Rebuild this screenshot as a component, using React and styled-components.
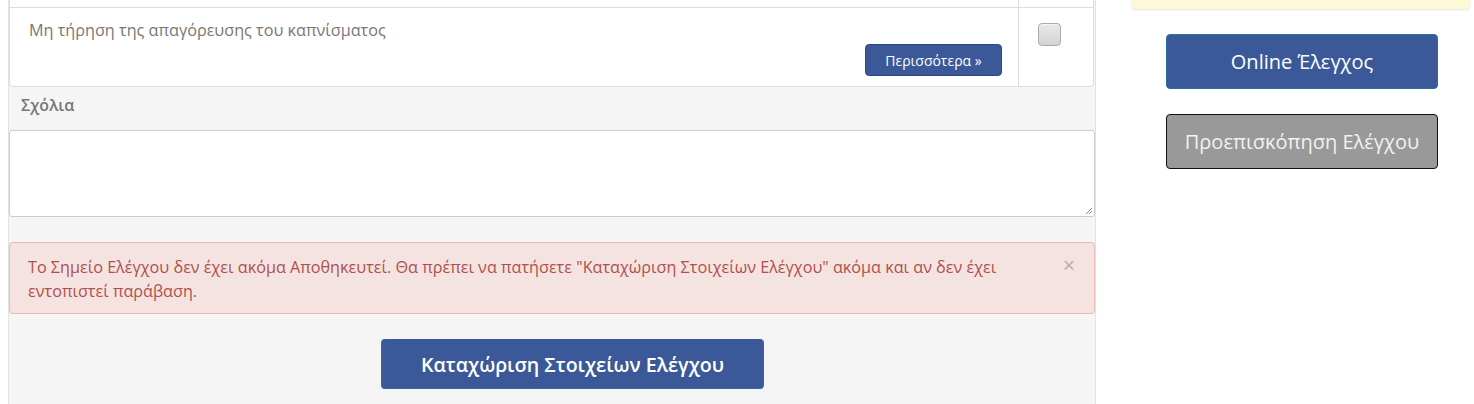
import React from "react";
import styled, { createGlobalStyle } from "styled-components";

const Global = createGlobalStyle`
  html, body { margin: 0; padding: 0; background: #fff; }
  body { font-family: "Open Sans", "Noto Sans", sans-serif; color: #333; }
  * { box-sizing: border-box; }
`;

const Page = styled.div`
  display: flex;
  align-items: flex-start;
  width: 1474px;
  height: 404px;
  overflow: hidden;
`;

const MainPanel = styled.div`
  margin-left: 8px;
  width: 1088px;
  height: 404px;
  background: #f5f5f5;
  border-left: 1px solid #e3e3e3;
  border-right: 1px solid #e3e3e3;
  display: flex;
  flex-direction: column;
`;

const Table = styled.div`
  width: 1085px;
  background: #fff;
  border: 1px solid #dddddd;
  border-top: none;
  border-radius: 0 0 4px 4px;
  display: flex;
  flex-direction: column;
`;

const Row = styled.div`
  display: grid;
  grid-template-columns: 1009px 1fr;
  height: ${(p) => p.$h}px;
  border-top: ${(p) => (p.$first ? "none" : "1px solid #dddddd")};
`;

const TextCell = styled.div`
  display: flex;
  flex-direction: column;
  padding: 11px 16px 10px 19px;
  border-right: 1px solid #dddddd;
`;

const RuleText = styled.div`
  font-size: 16.2px;
  line-height: 22px;
  color: #777;
`;

const MoreButton = styled.button`
  align-self: flex-end;
  margin-top: auto;
  height: 32px;
  width: 137px;
  border: 1px solid #2e4a80;
  border-radius: 4px;
  background: #3b5998;
  color: #fff;
  font-family: inherit;
  font-size: 14px;
  padding: 0;
`;

const CheckCell = styled.div`
  padding: 15px 0 0 19px;
`;

const CheckBox = styled.span`
  display: block;
  width: 23px;
  height: 23px;
  border: 1px solid #aaa;
  border-radius: 4px;
  background: linear-gradient(#e9e9e9, #d4d4d4);
  box-shadow: inset 0 1px 0 #f4f4f4;
`;

const Label = styled.div`
  margin: 7px 0 0 12px;
  height: 36px;
  font-size: 16px;
  font-weight: 600;
  color: #777;
  line-height: 22px;
`;

const TextArea = styled.div`
  position: relative;
  height: 87px;
  background: #fff;
  border: 1px solid #cccccc;
  border-radius: 3px;
`;

const Grip = styled.svg`
  position: absolute;
  right: 1px;
  bottom: 1px;
`;

const Alert = styled.div`
  position: relative;
  margin-top: 25px;
  height: 72px;
  padding: 12px 60px 0 18px;
  background: #f4e3e1;
  border: 1px solid #e8b8b2;
  border-radius: 4px;
  color: #b0504c;
  font-size: 16.2px;
  line-height: 24px;
`;

const Close = styled.span`
  position: absolute;
  right: 19px;
  top: 10px;
  font-size: 21px;
  line-height: 24px;
  color: #c4a9a8;
`;

const SubmitRow = styled.div`
  display: flex;
  padding: 25px 0 0 372px;
`;

const SubmitButton = styled.button`
  width: 383px;
  height: 50px;
  background: #3b5998;
  border: 1px solid #2e6da4;
  border-top-color: #3b5998;
  border-radius: 4px;
  color: #fff;
  font-family: inherit;
  font-size: 19.6px;
  font-weight: 600;
  padding: 0;
`;

const Sidebar = styled.div`
  margin-left: 36px;
  width: 338px;
  display: flex;
  flex-direction: column;
`;

const Notice = styled.div`
  height: 9px;
  background: #fdf8d6;
  border-radius: 0 0 4px 4px;
  box-shadow: 0 1px 2px rgba(0, 0, 0, 0.12);
`;

const SideButton = styled.button`
  margin: ${(p) => p.$mt}px 0 0 34px;
  width: 272px;
  height: 55px;
  border-radius: 4px;
  font-family: inherit;
  font-size: 20px;
  padding: 0;
  background: ${(p) => (p.$gray ? "#999999" : "#3b5998")};
  border: 1px solid ${(p) => (p.$gray ? "#111" : "#2b6fa3")};
  color: ${(p) => (p.$gray ? "#f2f2f2" : "#fff")};
`;

export default function App() {
  return (
    <Page>
      <Global />
      <MainPanel>
        <Table>
          <Row $h={7} $first>
            <TextCell />
            <div />
          </Row>
          <Row $h={79}>
            <TextCell>
              <RuleText>Μη τήρηση της απαγόρευσης του καπνίσματος</RuleText>
              <MoreButton>Περισσότερα »</MoreButton>
            </TextCell>
            <CheckCell>
              <CheckBox />
            </CheckCell>
          </Row>
        </Table>
        <Label>Σχόλια</Label>
        <TextArea>
          <Grip width="9" height="9" viewBox="0 0 9 9">
            <path d="M8 2 L2 8 M8 5 L5 8" stroke="#888" strokeWidth="1" />
          </Grip>
        </TextArea>
        <Alert>
          Το Σημείο Ελέγχου δεν έχει ακόμα Αποθηκευτεί. Θα πρέπει να πατήσετε
          "Καταχώριση Στοιχείων Ελέγχου" ακόμα και αν δεν έχει εντοπιστεί
          παράβαση.
          <Close>×</Close>
        </Alert>
        <SubmitRow>
          <SubmitButton>Καταχώριση Στοιχείων Ελέγχου</SubmitButton>
        </SubmitRow>
      </MainPanel>
      <Sidebar>
        <Notice />
        <SideButton $mt={25}>Online Έλεγχος</SideButton>
        <SideButton $mt={25} $gray>
          Προεπισκόπηση Ελέγχου
        </SideButton>
      </Sidebar>
    </Page>
  );
}
